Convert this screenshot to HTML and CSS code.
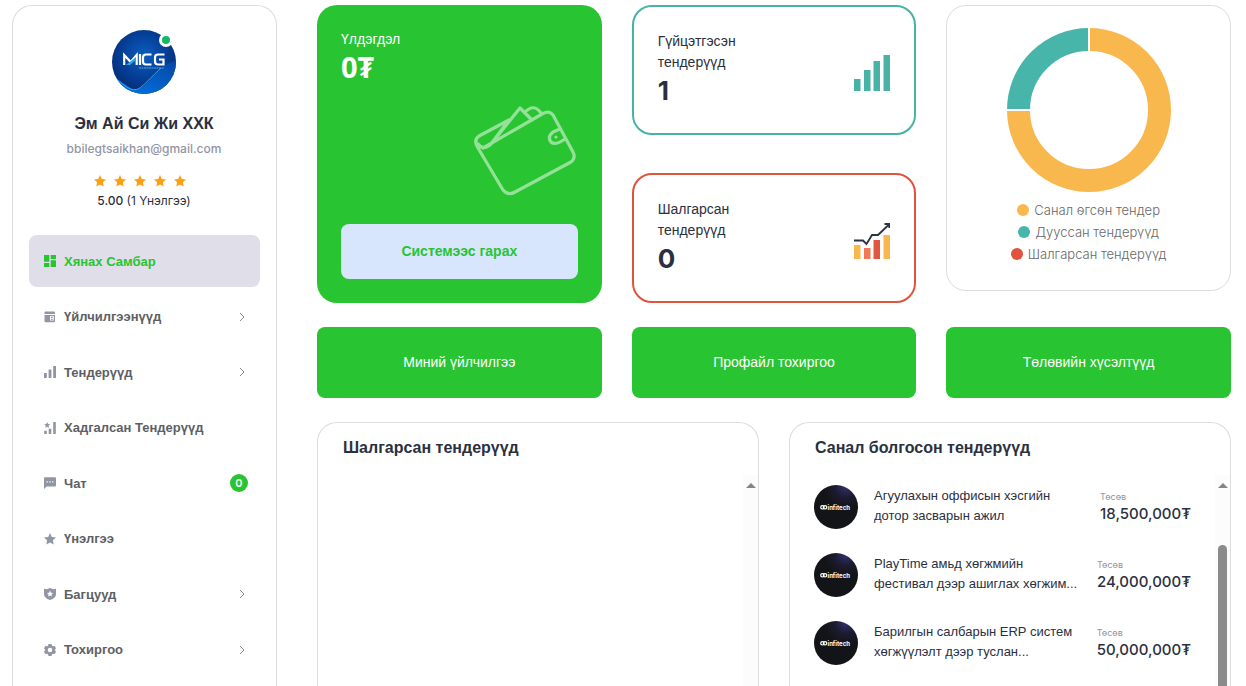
FILE: index.html
```html
<!DOCTYPE html>
<html lang="mn">
<head>
<meta charset="utf-8">
<meta name="viewport" content="width=device-width, initial-scale=1">
<title>Хянах Самбар</title>
<link rel="stylesheet" href="styles.css">
</head>
<body>
<svg class="defs" aria-hidden="true">
  <defs>
    <radialGradient id="navy" cx="50%" cy="40%" r="62%"><stop offset="0" stop-color="#0a5fc0"/><stop offset=".55" stop-color="#063f97"/><stop offset="1" stop-color="#042a72"/></radialGradient>
    <linearGradient id="azure" x1="0" y1="1" x2="1" y2="0"><stop offset="0" stop-color="#0478e8"/><stop offset="1" stop-color="#0646a4"/></linearGradient>
    <radialGradient id="night" cx="72%" cy="4%" r="50%"><stop offset="0" stop-color="#32306e"/><stop offset=".5" stop-color="#1c1b30"/><stop offset="1" stop-color="#131417"/></radialGradient>
    <clipPath id="round"><circle cx="32" cy="32" r="32"/></clipPath>
    <symbol id="chev" viewBox="0 0 8 10"><path d="M2 1l4 4-4 4" fill="none" stroke="#888" stroke-width="1"/></symbol>
    <symbol id="star" viewBox="0 0 12 12"><path d="M6 0l1.800 3.900 4.200.5-3.100 2.900.8 4.300L6 9.500l-3.700 2.100.8-4.300L0 4.400l4.200-.5z" fill="currentColor"/></symbol>
    <symbol id="infitech" viewBox="0 0 44 44">
      <circle cx="22" cy="22" r="22" fill="url(#night)"/>
      <g fill="none" stroke="#fff" stroke-width="1.200"><circle cx="8.400" cy="22.300" r="1.700"/><circle cx="11" cy="22.300" r="1.700"/></g>
      <text x="13.500" y="24.500" class="brand-text">infitech</text>
    </symbol>
  </defs>
</svg>
<div class="page">
  <aside class="sidebar">
    <div class="profile">
      <div class="avatar">
        <svg viewBox="0 0 64 64" width="64" height="64" role="img" aria-label="MICG">
          <g clip-path="url(#round)">
            <rect width="64" height="64" fill="url(#navy)"/>
            <path d="M0 46L20 59C25 61 30 58 35 53L50 37 64 30V64H0z" fill="url(#azure)"/>
            <path d="M0 44C10 54 18 62 26 59 32 56 41 45 49 38" fill="none" stroke="#38a6ee" stroke-width="1"/>
          </g>
          <g fill="none" stroke="#fff" stroke-width="2.200"><path d="M12.200 35V25l6.500 7 6-7v10M28 24v11M39.500 24.500H34q-3 0-3 3v4q0 3 3 3h5.500M52.500 24.500H46q-3 0-3 3v4q0 3 3 3h5.500v-5H47"/></g>
          <path d="M14 35l10-8v3l-6 5" fill="#2ba5e0"/>
          <path d="M27 38h25" stroke="#82b7e8" stroke-width=".8" stroke-dasharray="2 .5"/>
        </svg>
        <span class="online"></span>
      </div>
      <h1 class="company">Эм Ай Си Жи ХХК</h1>
      <a class="email" href="mailto:bbilegtsaikhan@gmail.com">bbilegtsaikhan@gmail.com</a>
      <div class="stars" role="img" aria-label="5 од">
        <svg><use href="#star"/></svg><svg><use href="#star"/></svg><svg><use href="#star"/></svg><svg><use href="#star"/></svg><svg><use href="#star"/></svg>
      </div>
      <p class="rating"><b>5.00</b> (1 Үнэлгээ)</p>
    </div>
    <nav>
      <ul class="menu">
        <li><a class="item active" href="#"><svg class="ico" viewBox="0 0 12 12"><path d="M0 0h5.300v6.700H0zM6.700 0H12v4H6.700zM0 8h5.300v4H0zM6.700 5.300H12V12H6.700z" fill="currentColor"/></svg>Хянах Самбар</a></li>
        <li><a class="item" href="#"><svg class="ico" viewBox="0 0 12 12"><path fill-rule="evenodd" d="M1.500.5h8.500a1 1 0 0 1 1 1V3H.5V1.500a1 1 0 0 1 1-1zM.5 4H11v6a1.200 1.200 0 0 1-1.200 1.200H1.700A1.200 1.200 0 0 1 .5 10zM6 5v4.500h3.800V5zm1.900.5a.9.900 0 0 1 0 1.800.9.900 0 0 1 0-1.800zM6.500 9q1.400-2 2.800 0z" fill="currentColor"/></svg>Үйлчилгээнүүд<svg class="chev"><use href="#chev"/></svg></a></li>
        <li><a class="item" href="#"><svg class="ico" viewBox="0 0 12 12"><path d="M0 7h2.800v5H0zM4.600 3.500h2.800V12H4.600zM9.200 0H12v12H9.200z" fill="currentColor"/></svg>Тендерүүд<svg class="chev"><use href="#chev"/></svg></a></li>
        <li><a class="item" href="#"><svg class="ico" viewBox="0 0 12 12"><path d="M3.200 0l.9 2 2.100.200-1.600 1.500.5 2.200-1.900-1.100-1.900 1.100.5-2.200L.2 2.200 2.300 2zM.2 8.800h2.600V12H.2zM4.700 6.800h2.600V12H4.700zM9.200 0h2.600v12H9.200z" fill="currentColor"/></svg>Хадгалсан Тендерүүд</a></li>
        <li><a class="item" href="#"><svg class="ico" viewBox="0 0 12 12"><path fill-rule="evenodd" d="M1 .2h10a1 1 0 0 1 1 1V8.500a1 1 0 0 1-1 1H2.500L0 12V1.200a1 1 0 0 1 1-1zM2.500 4.200v1.300h1.300V4.200zm2.800 0v1.300h1.300V4.200zm2.800 0v1.300h1.300V4.200z" fill="currentColor"/></svg>Чат<span class="count">0</span></a></li>
        <li><a class="item" href="#"><svg class="ico"><use href="#star"/></svg>Үнэлгээ</a></li>
        <li><a class="item" href="#"><svg class="ico" viewBox="0 0 12 12"><path fill-rule="evenodd" d="M0 .8q3.300 1 6-.8 2.700 1.800 6 .8v5.200q0 4-6 6-6-2-6-6zM6 2.600L5.100 4.700l-2.200.200 1.700 1.500L4 8.600l2-1.200 2 1.200-.6-2.200 1.700-1.500-2.200-.2z" fill="currentColor"/></svg>Багцууд<svg class="chev"><use href="#chev"/></svg></a></li>
        <li><a class="item" href="#"><svg class="ico" viewBox="0 0 12 12"><path fill-rule="evenodd" d="M4.500 0h3l.5 1.800 1 .5 1.700-.4 1.300 2.400L10.800 6 12 7.700l-1.300 2.400-1.700-.4-1 .5L7.500 12h-3L4 10.200l-1-.5-1.700.4L0 7.700 1.200 6 0 4.300l1.300-2.400 1.700.4 1-.5zM6 3.700a2.300 2.300 0 0 0 0 4.600 2.300 2.300 0 0 0 0-4.600z" fill="currentColor"/></svg>Тохиргоо<svg class="chev"><use href="#chev"/></svg></a></li>
      </ul>
    </nav>
  </aside>

  <main class="main">
    <section class="summary">
      <div class="balance">
        <p class="label">Үлдэгдэл</p>
        <p class="amount">0₮</p>
        <svg class="wallet" viewBox="0 0 102 92" aria-hidden="true"><path fill="none" stroke="#fff" stroke-opacity=".5" stroke-width="3.200" stroke-linejoin="round" stroke-linecap="round" d="M9 44L69 9.500Q75 6 79 11L99 48Q102 54 97 58L41 88Q34 92 29 86L4 44Q-1 36 5 32L35 16M4 40Q9 47 17 40L46 4 58 16M17 40L35 16M51 8Q60-1 67 9M86 25L79 28Q73 33 77 38 81 42 91 35"/><circle cx="82" cy="33" r="1.600" fill="#fff" fill-opacity=".5"/></svg>
        <button class="logout" type="button">Системээс гарах</button>
      </div>
      <div class="stats">
        <article class="stat teal">
          <div class="stat-body"><p class="label">Гүйцэтгэсэн тендерүүд</p><p class="number">1</p></div>
          <svg class="graph" viewBox="0 0 36 36" aria-hidden="true"><path d="M0 24h6.500v12H0zM10 15h6.500v21H10zM19.500 6H26v30h-6.500zM29.500 0H36v36h-6.500z" fill="#48b2a6"/></svg>
        </article>
        <article class="stat red">
          <div class="stat-body"><p class="label">Шалгарсан тендерүүд</p><p class="number">0</p></div>
          <svg class="graph" viewBox="0 0 36 36" aria-hidden="true"><path d="M0 22h6.500v14H0zM29.500 12H36v24h-6.500z" fill="#f9b84e"/><path d="M10 25h6.500v11H10z" fill="#f27856"/><path d="M19.500 17H26v19h-6.500z" fill="#e25640"/><path d="M0 17.500h9l3.500 3.500 5.500-9h6L35 1.500M30.500 1H35.300V5" fill="none" stroke="#2c3344" stroke-width="1.800"/></svg>
        </article>
      </div>
      <div class="chart">
        <svg class="donut" viewBox="0 0 164 164" role="img" aria-label="Тендерийн харьцаа">
          <g fill="none" stroke-width="23"><path d="M82 11.500A70.500 70.500 0 1 1 11.500 82" stroke="#f9b84e"/><path d="M11.500 82A70.500 70.500 0 0 1 82 11.500" stroke="#48b5aa"/></g>
          <path d="M82 0v24M0 82h24" stroke="#fff" stroke-width="2"/>
        </svg>
        <ul class="legend">
          <li class="c-amber">Санал өгсөн тендер</li>
          <li class="c-teal">Дууссан тендерүүд</li>
          <li class="c-red">Шалгарсан тендерүүд</li>
        </ul>
      </div>
    </section>

    <section class="actions">
      <a class="action" href="#">Миний үйлчилгээ</a>
      <a class="action" href="#">Профайл тохиргоо</a>
      <a class="action" href="#">Төлөвийн хүсэлтүүд</a>
    </section>

    <section class="panels">
      <article class="panel">
        <h2 class="panel-title">Шалгарсан тендерүүд</h2>
        <div class="panel-scroll"><div class="tenders"></div><div class="track"><span class="arrow"></span></div></div>
      </article>
      <article class="panel">
        <h2 class="panel-title">Санал болгосон тендерүүд</h2>
        <div class="panel-scroll">
          <ul class="tenders">
            <li class="tender"><svg class="logo" role="img" aria-label="infitech"><use href="#infitech"/></svg><a class="name" href="#">Агуулахын оффисын хэсгийн дотор засварын ажил</a><div class="budget"><small>Төсөв</small><strong>18,500,000₮</strong></div></li>
            <li class="tender"><svg class="logo" role="img" aria-label="infitech"><use href="#infitech"/></svg><a class="name" href="#">PlayTime амьд хөгжмийн фестивал дээр ашиглах хөгжим...</a><div class="budget"><small>Төсөв</small><strong>24,000,000₮</strong></div></li>
            <li class="tender"><svg class="logo" role="img" aria-label="infitech"><use href="#infitech"/></svg><a class="name" href="#">Барилгын салбарын ERP систем хөгжүүлэлт дээр туслан...</a><div class="budget"><small>Төсөв</small><strong>50,000,000₮</strong></div></li>
          </ul>
          <div class="track"><span class="arrow"></span><span class="thumb"></span></div>
        </div>
      </article>
    </section>
  </main>
</div>
</body>
</html>
```

FILE: styles.css
```css
:root {
  --green: #28c431;
  --ink: #2b303f;
  --line: #dcdcde;
  --teal: #48b2a6;
  --red: #e0533d;
  --amber: #f9b84e;
  --sans: "Liberation Sans", Arial, sans-serif;
}
* { box-sizing: border-box; }
body, h1, h2, p, ul { margin: 0; padding: 0; }
ul { list-style: none; }
a { color: inherit; text-decoration: none; }
body { background: #fff; color: var(--ink); font-family: var(--sans); font-size: 14px; }
.defs { position: absolute; width: 0; height: 0; }

.page { display: flex; gap: 40px; height: 100vh; overflow: hidden; padding: 5px 15px 0 12px; }

.sidebar { flex: 0 0 265px; border: 1px solid var(--line); border-bottom: 0; border-radius: 20px 20px 0 0; padding: 24px 16px 0; }
.profile { display: flex; flex-direction: column; align-items: center; padding-right: 1px; }
.avatar { position: relative; height: 64px; }
.online { position: absolute; top: 3px; right: 3px; width: 14px; height: 14px; border: 3px solid #fff; border-radius: 50%; background: #12b76a; }
.company { margin-top: 18px; font-size: 16px; line-height: 24px; font-weight: 700; }
.email { margin-top: 3px; color: #9296a4; font: 500 12px/20px Inter, sans-serif; }
.stars { display: flex; gap: 8px; margin-top: 16px; padding-right: 8px; color: #fb9f13; }
.stars svg { width: 12px; height: 12px; }
.rating { margin-top: 4px; font: 12px/20px Inter, var(--sans); }
.rating b { font-weight: 500; }

.menu { display: flex; flex-direction: column; justify-content: space-between; min-height: 441px; margin-top: 24px; }
.item { display: flex; align-items: center; gap: 8px; height: 52px; padding: 0 12px 0 15px; border-radius: 8px; color: #5d5f65; font-size: 13px; font-weight: 700; }
.item.active { background: #e0dee8; color: var(--green); }
.ico { width: 12px; height: 12px; color: #9295a3; }
.active .ico { color: var(--green); }
.chev { width: 8px; height: 10px; margin: 0 2px 0 auto; }
.count { display: grid; place-items: center; width: 18px; height: 18px; margin-left: auto; border-radius: 50%; background: var(--green); color: #fff; font: 600 11px/18px Inter, sans-serif; }

.main { flex: 1; display: flex; flex-direction: column; gap: 24px; min-width: 0; }
.summary { display: grid; grid-template-columns: repeat(3, 1fr); gap: 30px; }
.balance { display: flex; flex-direction: column; padding: 24px; border-radius: 20px; background: var(--green); color: #fff; }
.label { font-size: 14px; line-height: 21px; }
.amount { font: 700 29px/34px "Noto Sans", sans-serif; }
.wallet { align-self: flex-end; width: 102px; height: 92px; margin: 20px 2px 0 0; }
.logout { height: 55px; margin-top: auto; padding-bottom: 2px; border: 0; border-radius: 8px; background: #d7e5fd; color: var(--green); font: 700 14px/20px var(--sans); }

.stats { display: grid; gap: 38px; }
.stat { display: flex; align-items: center; justify-content: space-between; height: 130px; padding: 0 24px; border: 2px solid var(--teal); border-radius: 20px; }
.stat.red { border-color: var(--red); }
.stat-body { width: 110px; }
.number { font: 700 26px/36px Inter, sans-serif; }
.graph { width: 36px; height: 36px; margin-top: 6px; }

.chart { align-self: start; display: flex; flex-direction: column; align-items: center; height: 286px; padding-top: 22px; border: 1px solid var(--line); border-radius: 20px; }
.donut { width: 164px; height: 164px; }
.legend { display: flex; flex-direction: column; align-items: center; margin-top: 7px; color: #686868; font: 300 13px/22px Inter, sans-serif; }
.legend li { display: flex; align-items: center; gap: 5px; }
.legend li::before { content: ""; width: 12px; height: 12px; border-radius: 50%; background: var(--amber); }
.legend .c-teal::before { background: #48b5aa; }
.legend .c-red::before { background: var(--red); }

.actions { display: grid; grid-template-columns: repeat(3, 1fr); gap: 30px; }
.action { display: grid; place-items: center; height: 71px; padding-bottom: 2px; border-radius: 8px; background: var(--green); color: #fff; font-size: 14px; }

.panels { flex: 1; display: grid; grid-template-columns: 1fr 1fr; gap: 30px; min-height: 0; }
.panel { display: flex; flex-direction: column; min-width: 0; min-height: 0; border: 1px solid var(--line); border-bottom: 0; border-radius: 20px 20px 0 0; }
.panel-title { padding: 13px 25px 0; font-size: 16px; line-height: 24px; }
.panel-scroll { flex: 1; display: flex; min-height: 0; margin-top: 15px; }
.tenders { flex: 1; display: flex; flex-direction: column; gap: 24px; min-width: 0; padding: 10px 24px; }
.tender { display: flex; align-items: center; gap: 16px; height: 44px; }
.logo { flex: none; width: 44px; height: 44px; }
.brand-text { fill: #fff; font: 700 6px Inter, sans-serif; }
.name { flex: 1; min-width: 0; padding-bottom: 2px; font: 13px/20px var(--sans); }
.budget { flex: none; line-height: 18px; }
.budget small, .budget strong { display: block; }
.budget small { color: #93959b; font: 9px/14px Inter, sans-serif; }
.budget strong { font: 500 15px/20px Inter, sans-serif; }
.track { flex: none; display: flex; flex-direction: column; align-items: center; width: 15px; padding-top: 8px; background: #fcfcfc; }
.arrow { border: 5px solid transparent; border-top: 0; border-bottom-color: #858585; }
.thumb { flex: 1; width: 9px; margin-top: 57px; border-radius: 5px 5px 0 0; background: #8b8b8b; }
```
